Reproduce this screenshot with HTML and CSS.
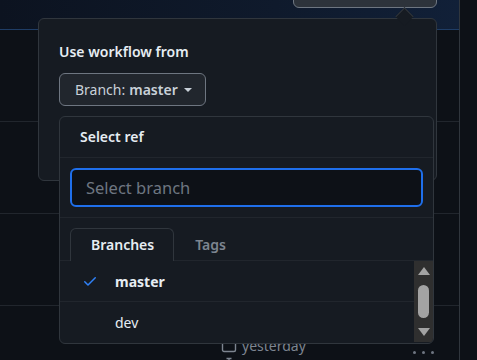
FILE: index.html
```html
<!DOCTYPE html>
<html>
<head>
  <title>Run workflow</title>
  <link rel="stylesheet" href="styles.css">
</head>
<body>

<div class="page">
  <div class="topbar">
    <div class="run-btn"></div>
  </div>
  <div class="run-row"></div>
  <div class="run-row"></div>
  <div class="run-row"></div>
  <div class="run-row last">
    <div class="meta-col">
      <div class="meta">
        <svg width="16" height="16" viewBox="0 0 16 16"><rect x="1.5" y="2.5" width="13" height="12" rx="1.5" fill="none" stroke="#7d8590" stroke-width="1.4"/></svg>
        <span>yesterday</span>
      </div>
      <div class="meta">
        <svg width="16" height="16" viewBox="0 0 16 16"><path d="M5.5 1.5h5M8 1.5v2.5" stroke="#7d8590" stroke-width="1.4" fill="none"/><circle cx="8" cy="9.5" r="5" fill="none" stroke="#7d8590" stroke-width="1.4"/></svg>
      </div>
    </div>
    <div class="dots"><i></i><i></i><i></i></div>
  </div>

  <!-- Popover del workflow -->
  <div class="popover">
    <div class="caret"></div>
    <p class="pop-title">Use workflow from</p>
    <button class="branch-btn">Branch: <b>master</b> <span class="tri"></span></button>

    <div class="select-menu">
      <div class="menu-header">Select ref</div>
      <div class="menu-filter">
        <div class="filter-input">Select branch</div>
      </div>
      <div class="menu-tabs">
        <div class="tab active">Branches</div>
        <div class="tab">Tags</div>
      </div>
      <div class="menu-list">
        <div class="items">
          <div class="item selected">
            <svg width="16" height="16" viewBox="0 0 16 16"><path fill="#2f81f7" d="M13.78 4.22a.75.75 0 0 1 0 1.06l-7.25 7.25a.75.75 0 0 1-1.06 0L2.22 9.28a.751.751 0 0 1 .018-1.042.751.751 0 0 1 1.042-.018L6 10.94l6.72-6.72a.75.75 0 0 1 1.06 0Z"/></svg>
            <span>master</span>
          </div>
          <div class="item">
            <span class="no-icon"></span>
            <span>dev</span>
          </div>
        </div>
        <div class="scrollbar">
          <span class="arrow up"></span>
          <span class="thumb"></span>
          <span class="arrow down"></span>
        </div>
      </div>
    </div>
  </div>
</div>

</body>
</html>
```

FILE: styles.css
```css
body { margin: 0; background: #0d1117; font-family: "Noto Sans", "Liberation Sans", sans-serif; color: #e6edf3; }
.page { position: relative; width: 459px; height: 360px; border-right: 1px solid #30363d; overflow: hidden; }
.topbar { height: 29px; background: linear-gradient(90deg, #0c1320, #0f1a2c 60%, #112038); border-bottom: 1px solid #1f3d66; position: relative; }
.run-btn { position: absolute; left: 293px; top: -10px; width: 142px; height: 16px; background: #2d333b; border: 1px solid #6e7681; border-radius: 6px; }
.run-row { height: 91px; border-bottom: 1px solid #21262d; }
.run-row.last { border-bottom: none; display: flex; justify-content: space-between; }
.meta-col { padding: 29px 0 0 221px; }
.meta { display: flex; align-items: center; gap: 5px; height: 20px; color: #7d8590; font-size: 14px; }
.dots { display: flex; gap: 6px; padding: 45px 25px 0 0; }
.dots i { width: 3px; height: 3px; border-radius: 50%; background: #6e7681; }

.popover { position: absolute; left: 38px; top: 18px; width: 357px; height: 121px; padding: 20px; background: #161b22; border: 1px solid #30363d; border-radius: 6px; }
.caret { position: absolute; right: 25px; top: -9px; width: 12px; height: 12px; background: #161b22; border-left: 1px solid #30363d; border-top: 1px solid #30363d; transform: rotate(45deg); }
.pop-title { margin: 3px 0 12px; font-size: 14px; font-weight: 600; }
.branch-btn { display: flex; align-items: center; gap: 6px; height: 33px; padding: 0 13px 0 15px; background: #21262d; border: 1px solid #6e7681; border-radius: 6px; color: #c9d1d9; font-family: inherit; font-size: 14px; }
.branch-btn b { font-weight: 600; margin-left: -2px; }
.tri { width: 0; height: 0; border-left: 4px solid transparent; border-right: 4px solid transparent; border-top: 4px solid #c9d1d9; }

.select-menu { position: absolute; left: 20px; top: 97px; width: 373px; height: 226px; background: #161b22; border: 1px solid #30363d; border-radius: 6px; overflow: hidden; }
.menu-header { height: 40px; line-height: 40px; padding-left: 20px; font-size: 14px; font-weight: 600; border-bottom: 1px solid #21262d; }
.menu-filter { padding: 10px; border-bottom: 1px solid #21262d; }
.filter-input { height: 35px; line-height: 35px; padding-left: 14px; background: #0d1117; border: 2px solid #1f6feb; border-radius: 6px; color: #6e7681; font-size: 16.5px; }
.menu-tabs { display: flex; align-items: flex-end; height: 42px; padding-left: 10px; border-bottom: 1px solid #21262d; }
.tab { height: 32px; line-height: 32px; padding: 0 19px 0 20px; font-size: 14px; font-weight: 600; color: #7d8590; border: 1px solid transparent; border-bottom: none; border-radius: 6px 6px 0 0; margin-bottom: -1px; }
.tab.active { color: #e6edf3; background: #161b22; border-color: #30363d; }
.menu-list { display: flex; height: 81px; }
.items { flex: 1; }
.item { display: flex; align-items: center; gap: 17px; height: 40px; padding-left: 22px; font-size: 14px; border-bottom: 1px solid #21262d; }
.item:last-child { border-bottom: none; }
.item.selected span { font-weight: 700; }
.no-icon { width: 16px; }
.scrollbar { width: 19px; background: #2f2f2f; display: flex; flex-direction: column; align-items: center; justify-content: space-between; padding: 6px 0 6px; }
.arrow { width: 0; height: 0; border-left: 6px solid transparent; border-right: 6px solid transparent; }
.arrow.up { border-bottom: 8px solid #a3a3a3; }
.arrow.down { border-top: 8px solid #a3a3a3; }
.thumb { width: 11px; height: 33px; background: #a3a3a3; border-radius: 6px; }
```
